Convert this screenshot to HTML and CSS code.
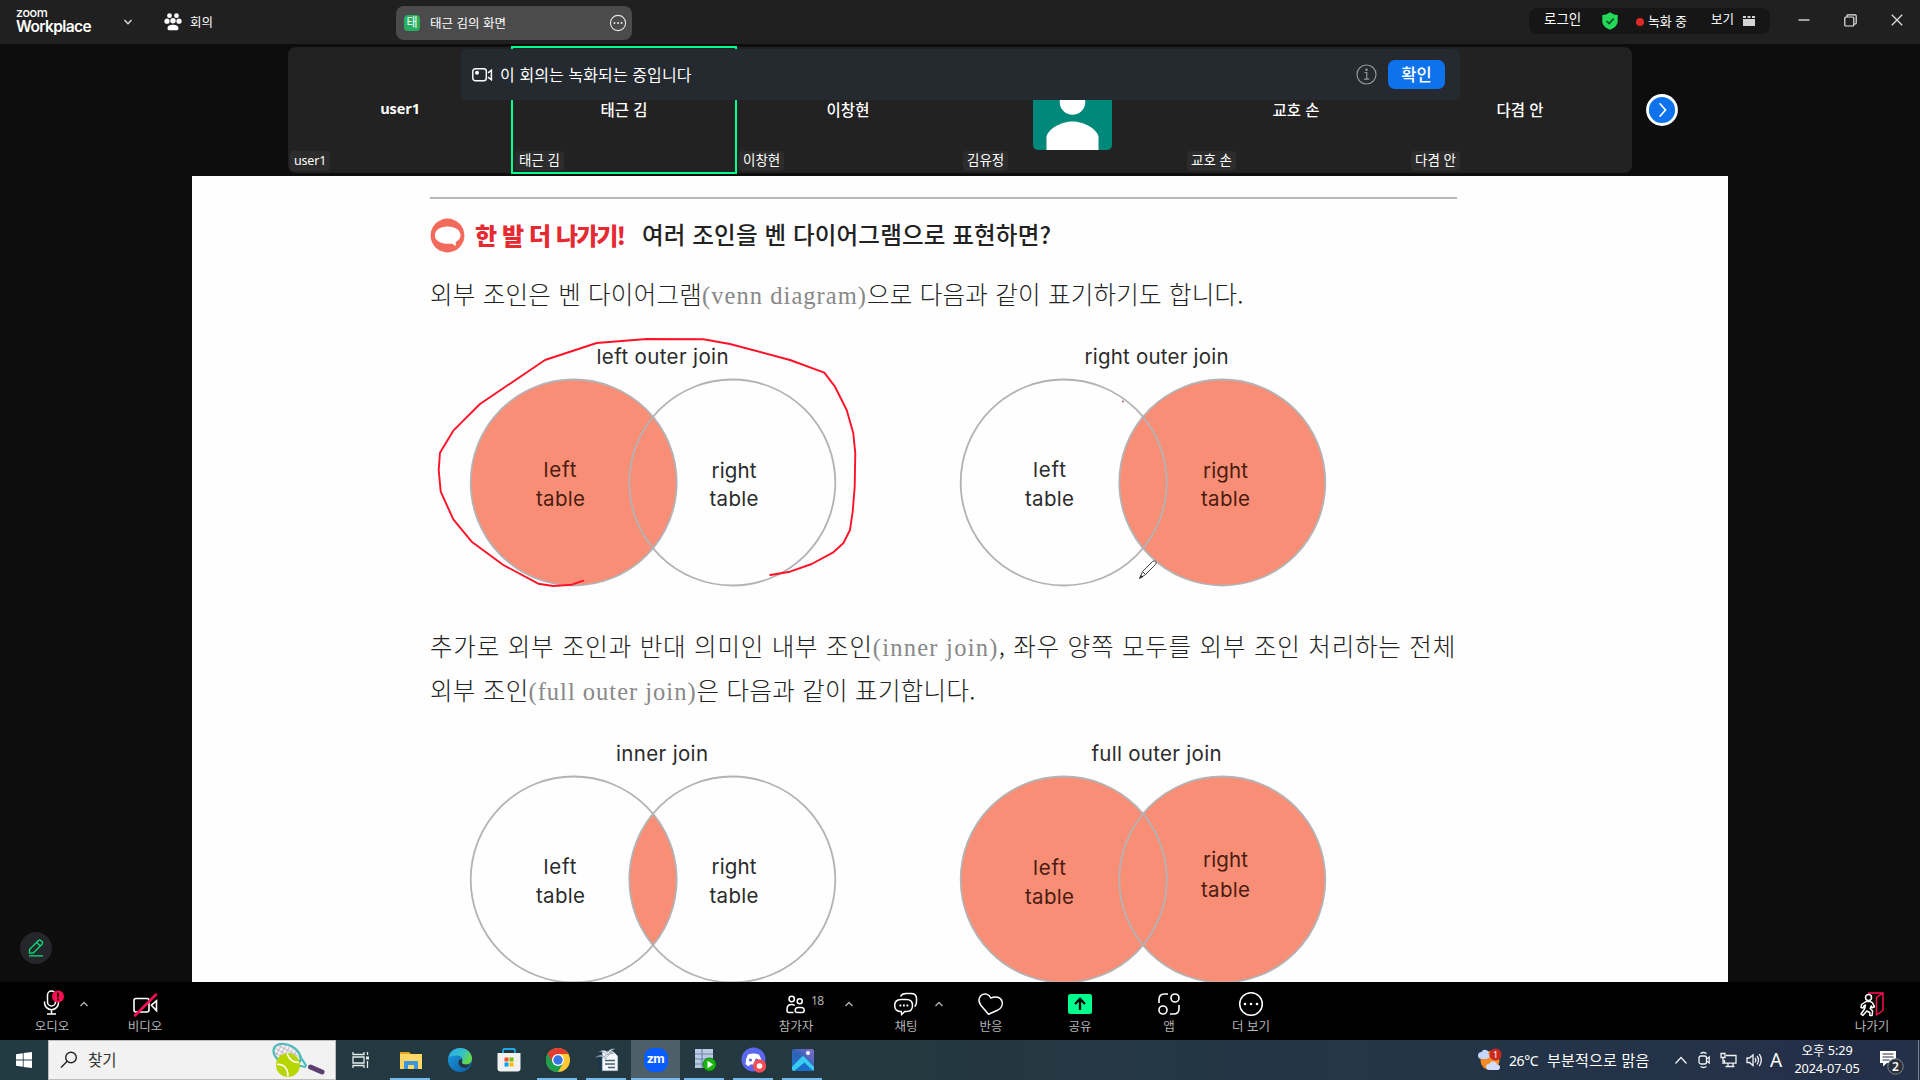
FILE: index.html
```html
<!DOCTYPE html>
<html lang="ko">
<head>
<meta charset="utf-8">
<title>Zoom Workplace</title>
<link rel="stylesheet" href="styles.css">
</head>
<body>
<div class="screen">
  <header class="titlebar">
    <div class="logo"><span class="logo-top">zoom</span><span class="logo-name">Workplace</span></div>
    <svg class="tb-chev" width="10" height="8" viewBox="0 0 10 8"><path d="M1.5 2l3.5 3.7L8.500 2" fill="none" stroke="#ddd" stroke-width="1.4"/></svg>
    <div class="meeting">
      <svg width="18" height="18" viewBox="0 0 18 18" fill="#fff"><circle cx="5.500" cy="2.700" r="2.400"/><circle cx="12.500" cy="2.700" r="2.400"/><circle cx="3" cy="8.200" r="2.600"/><circle cx="15" cy="8.200" r="2.600"/><circle cx="9" cy="7.800" r="2.700"/><path d="M3.500 15.500c0-2.800 2.500-3.800 5.500-3.800s5.500 1 5.500 3.800c0 1.300-1 1.800-2.200 1.800H5.700c-1.200 0-2.200-.5-2.200-1.800z"/></svg>
      <span>회의</span>
    </div>
    <div class="tab">
      <span class="tab-badge">태</span><span class="tab-name">태근 김의 화면</span>
      <svg width="18" height="18" viewBox="0 0 18 18"><circle cx="9" cy="9" r="7.600" fill="none" stroke="#e4e4e4" stroke-width="1.100"/><g fill="#e4e4e4"><circle cx="5.500" cy="9" r="1"/><circle cx="9" cy="9" r="1"/><circle cx="12.500" cy="9" r="1"/></g></svg>
    </div>
    <div class="status">
      <span class="up login">로그인</span>
      <svg class="shield" width="16" height="18" viewBox="0 0 16 18"><path d="M8 .3c2 1.700 4.500 2.500 7.700 2.700v6.300c0 4-3.500 7-7.700 8.500C3.800 16.300.3 13.300.3 9.300V3C3.500 2.800 6 2 8 .3z" fill="#23d959"/><path d="M4.500 9l2.600 2.600 4.600-5" fill="none" stroke="#124b22" stroke-width="1.600"/></svg>
      <span class="rec-dot"></span><span class="rec">녹화 중</span>
      <span class="up view">보기</span>
      <svg class="view-icon" width="12" height="12" viewBox="0 0 12 12" fill="#d4d4d4"><path d="M0 1h3v2H0zM4.500 1h3v2h-3zM9 1h3v2H9zM0 4h12v7H0z"/></svg>
    </div>
    <div class="win-buttons">
      <svg width="12" height="12" viewBox="0 0 12 12"><path d="M.5 6h11" stroke="#ccc" stroke-width="1.500"/></svg>
      <svg width="13" height="13" viewBox="0 0 13 13" fill="none" stroke="#e8e8e8" stroke-width="1.200"><rect x=".8" y="3" width="9" height="9" rx="1"/><path d="M3 3V1.600Q3 .8 4 .8h7.200q1 0 1 1V9q0 1-1 1H10"/></svg>
      <svg width="12" height="12" viewBox="0 0 12 12"><path d="M.8.8l10.400 10.400M11.200.8L.8 11.200" stroke="#ddd" stroke-width="1.300"/></svg>
    </div>
  </header>

  <section class="gallery">
    <div class="strip">
      <div class="tile"><b class="latin">user1</b><span class="tag latin">user1</span></div>
      <div class="tile active"><b>태근 김</b><span class="tag">태근 김</span></div>
      <div class="tile"><b>이창현</b><span class="tag">이창현</span></div>
      <div class="tile">
        <svg class="avatar" width="79" height="79" viewBox="0 0 79 79"><rect width="79" height="79" rx="5" fill="#00897b"/><circle cx="39.500" cy="31" r="12.800" fill="#fff"/><path d="M13.500 79V57c2-8 15-15 26-15s24 7 26 15v22z" transform="translate(0 8.500)" fill="#fff"/></svg>
        <span class="tag">김유정</span></div>
      <div class="tile"><b>교호 손</b><span class="tag">교호 손</span></div>
      <div class="tile"><b>다겸 안</b><span class="tag">다겸 안</span></div>
    </div>
    <svg class="next" width="32" height="32" viewBox="0 0 32 32"><circle cx="16" cy="16" r="14.500" fill="#0e72ed" stroke="#fff" stroke-width="2.800"/><path d="M14 9.800l5.500 6.200-5.500 6.200" fill="none" stroke="#fff" stroke-width="1.700" stroke-linecap="round"/></svg>
    <div class="banner">
      <svg width="21" height="14" viewBox="0 0 21 14"><rect x=".8" y=".8" width="13.500" height="12" rx="2.500" fill="none" stroke="#fff" stroke-width="1.400"/><circle cx="5" cy="4.800" r="2" fill="#fff"/><path d="M16 4.800l3.400-2.600v9.600L16 9.200" fill="none" stroke="#fff" stroke-width="1.500"/></svg>
      <span class="banner-text">이 회의는 녹화되는 중입니다</span>
      <svg class="info" width="21" height="21" viewBox="0 0 21 21" fill="none" stroke="#92959a" stroke-width="1.200"><circle cx="10.500" cy="10.500" r="9.500"/><path d="M8.500 8.500h2.300v6.500M8 15.200h5.200"/><circle cx="10.500" cy="5.700" r=".7"/></svg>
      <button class="ok">확인</button>
    </div>
  </section>

  <main class="stage">
    <article class="page">
      <div class="rule"></div>
      <h1 class="heading">
        <svg width="35" height="35" viewBox="0 0 35 35"><circle cx="17.500" cy="17.500" r="16.900" fill="#f26a5c"/><path d="M17.500 8.500c8 0 13 3.700 13 8.800 0 3.200-2 5.200-4.800 6.600l.2 4-4.500-2.300c-9 1.200-16.500-2-16.500-8.300 0-5.100 5-8.800 12.600-8.800z" fill="#fff"/></svg>
        <span class="red">한 발 더 나가기!</span><span class="question">여러 조인을 벤 다이어그램으로 표현하면?</span>
      </h1>
      <p class="para p1">외부 조인은 벤 다이어그램<i>(venn diagram)</i>으로 다음과 같이 표기하기도 합니다.</p>
      <div class="figures top">
        <svg class="venn" width="510" height="265" viewBox="430 335 510 265">
          <circle class="fill" cx="573.700" cy="482.500" r="103"/><circle class="ring" cx="573.700" cy="482.500" r="103"/><circle class="ring" cx="732.300" cy="482.500" r="103"/>
          <text x="662.500" y="363.500" textLength="132">left outer join</text>
          <text class="on" x="560" y="477" textLength="33">left</text><text class="on" x="560.500" y="506" textLength="49">table</text>
          <text x="734" y="477.500" textLength="45">right</text><text x="734" y="506" textLength="49">table</text>
          <path class="ink" d="M770.300 575l19.700-3.300 21.700-7.700 21.600-11.700 10-9 6.700-13.300 2.700-18.300 2-25 .6-33.400-2-20-6.600-23.300-11.700-23.300-10.700-14L790 360l-60-16-26.700-4.700-56.600-.3-50 4L545 360l-65 44-16.700 16.700-10 10L440 452.700l-1.300 17.300 2 21.700 12.600 27.600 18.400 22.400 31.600 23.300 35 18.700 15 2.300 18.400-1.300 11.600-4"/>
        </svg>
        <svg class="venn" width="510" height="265" viewBox="940 335 510 265">
          <circle class="fill" cx="1222.300" cy="482.500" r="103"/><circle class="ring" cx="1063.700" cy="482.500" r="103"/><circle class="ring" cx="1222.300" cy="482.500" r="103"/>
          <text x="1156.500" y="363.500" textLength="144">right outer join</text>
          <text x="1049.500" y="477" textLength="33">left</text><text x="1049.500" y="506" textLength="49">table</text>
          <text class="on" x="1225.500" y="477.500" textLength="45">right</text><text class="on" x="1225.500" y="506" textLength="49">table</text>
          <circle cx="1123" cy="401.500" r=".9" fill="#a44"/>
          <path d="M1139.500 578.500l3-7 10-10q2-1.500 3.300 0 1 1.500-.3 3l-10 10zM1142.500 571.500l3 3" fill="#fff" stroke="#444" stroke-width="1"/>
          <path d="M1139.500 578.500l1.500-3.500 2 2z" fill="#222"/>
        </svg>
      </div>
      <p class="para p2">추가로 외부 조인과 반대 의미인 내부 조인<i>(inner join)</i>, 좌우 양쪽 모두를 외부 조인 처리하는 전체</p>
      <p class="para p3">외부 조인<i>(full outer join)</i>은 다음과 같이 표기합니다.</p>
      <div class="figures bottom">
        <svg class="venn" width="510" height="250" viewBox="430 732 510 250">
          <path class="fill" d="M653 813.800A103 103 0 0 1 653 945.200A103 103 0 0 1 653 813.800z"/>
          <circle class="ring" cx="573.700" cy="879.500" r="103"/><circle class="ring" cx="732.300" cy="879.500" r="103"/>
          <text x="662" y="760.500" textLength="92">inner join</text>
          <text x="560" y="873.500" textLength="33">left</text><text x="560.500" y="903" textLength="49">table</text>
          <text x="734" y="873.500" textLength="45">right</text><text x="734" y="903" textLength="49">table</text>
        </svg>
        <svg class="venn" width="510" height="250" viewBox="940 732 510 250">
          <circle class="fill" cx="1063.700" cy="879.500" r="103"/><circle class="fill" cx="1222.300" cy="879.500" r="103"/><circle class="ring" cx="1063.700" cy="879.500" r="103"/><circle class="ring" cx="1222.300" cy="879.500" r="103"/>
          <text x="1156.500" y="760.500" textLength="130">full outer join</text>
          <text class="on" x="1049.500" y="875" textLength="33">left</text><text class="on" x="1049.500" y="904" textLength="49">table</text>
          <text class="on" x="1225.500" y="867" textLength="45">right</text><text class="on" x="1225.500" y="897" textLength="49">table</text>
        </svg>
      </div>
    </article>
    <div class="annotate"><svg width="18" height="18" viewBox="0 0 18 18" fill="none" stroke="#0be07e" stroke-width="1.300" stroke-linejoin="round"><path d="M2.500 10.500l9-9q1.200-1 2.500.2l1 1q1.200 1.300 0 2.500l-9 9H2.500zM9.700 3.500l3.800 3.800M2 16.800h14"/></svg></div>
  </main>

  <nav class="toolbar">
    <div class="tool audio">
      <svg width="28" height="28" viewBox="0 0 28 28" fill="none" stroke="#fff" stroke-width="1.500"><rect x="9.500" y="1" width="8" height="15" rx="4"/><path d="M6.500 11.500v1.200a7 7 0 0 0 14 0v-1.200M13.500 19.500v4M9 24h9"/><circle cx="20" cy="6.500" r="6" fill="#ff0d52" stroke="none"/><path d="M20 2.500v4.800M20 8.500v2" stroke="#2c0010" stroke-width="2"/></svg>
      <span>오디오</span></div>
    <svg class="caret" width="10" height="8" viewBox="0 0 10 8"><path d="M1.500 6L5 2.500 8.500 6"/></svg>
    <div class="tool video">
      <svg width="28" height="28" viewBox="0 0 28 28" fill="none" stroke="#fff" stroke-width="1.600"><rect x="3" y="8.500" width="15" height="13.500" rx="2"/><path d="M20.500 15.200l5-4.500v10z"/><path d="M4 25.500L25 4.500" stroke="#ff0d52" stroke-width="2.500" stroke-linecap="round"/></svg>
      <span>비디오</span></div>
    <div class="tool people">
      <svg width="28" height="28" viewBox="0 0 28 28" fill="none" stroke="#fff" stroke-width="1.500"><circle cx="9.700" cy="9" r="2.700"/><circle cx="17.700" cy="11.200" r="2.500"/><path d="M11.500 22.500H7q-2 0-2-2v-1.300q0-4.700 4.700-4.700 1.800 0 3 1M16 17.500h3.200q3 0 3 3 0 2-2 2h-5q-2 0-2-2 0-3 2.800-3z"/></svg>
      <span>참가자</span><em class="count">18</em></div>
    <svg class="caret c2" width="10" height="8" viewBox="0 0 10 8"><path d="M1.500 6L5 2.500 8.500 6"/></svg>
    <div class="tool chat">
      <svg width="28" height="28" viewBox="0 0 28 28" fill="none" stroke="#fff" stroke-width="1.500"><path d="M8.500 9.500h6q6 0 6 6t-6 6h-1.800l-3 3-.5-3h-1q-5.500-.3-5.500-6t6-6z"/><path d="M8.500 6.500q1.500-3 5.500-3h5q5.500 0 5.500 5v2.500q0 4.500-2 5.500"/><path d="M7.500 15.500h1.800M11 15.500h1.800M14.500 15.500h1.800" stroke-width="2"/></svg>
      <span>채팅</span></div>
    <svg class="caret c3" width="10" height="8" viewBox="0 0 10 8"><path d="M1.500 6L5 2.500 8.500 6"/></svg>
    <div class="tool react">
      <svg width="28" height="28" viewBox="0 0 28 28" fill="none" stroke="#fff" stroke-width="1.500" stroke-linejoin="round"><path d="M11.500 24.200L4 15.500C1.500 12 1.500 8 4 5.500 7.500 2.500 12 4 13.800 8c5-2 10-1 11.200 3.500 1 3.500-1 7-4.500 8.700z"/></svg>
      <span>반응</span></div>
    <div class="tool share">
      <svg width="28" height="28" viewBox="0 0 28 28"><rect x="2" y="4" width="24" height="20" rx="2.500" fill="#00ff8c"/><path d="M14 20v-9M9 14l5-5 5 5" fill="none" stroke="#000" stroke-width="2.300"/></svg>
      <span>공유</span></div>
    <div class="tool apps">
      <svg width="28" height="28" viewBox="0 0 28 28" fill="none" stroke="#fff" stroke-width="1.600"><circle cx="20" cy="8" r="4"/><circle cx="8" cy="20" r="4"/><path d="M4 13V9.500Q4 4 9.500 4H13M24 15v3.500q0 5.500-5.500 5.500H15"/></svg>
      <span>앱</span></div>
    <div class="tool more">
      <svg width="28" height="28" viewBox="0 0 28 28"><circle cx="14" cy="14" r="11.300" fill="none" stroke="#fff" stroke-width="1.500"/><g fill="#fff"><circle cx="8" cy="14" r="1.300"/><circle cx="14" cy="14" r="1.300"/><circle cx="20" cy="14" r="1.300"/></g></svg>
      <span>더 보기</span></div>
    <div class="tool leave">
      <svg width="28" height="28" viewBox="0 0 28 28" fill="none" stroke="#fff" stroke-width="1.500" stroke-linejoin="round" stroke-linecap="round"><path d="M10.500 3H25v17.500l-6.500 4.500V7.500L25 3" stroke="#ff0d52"/><circle cx="10.500" cy="7.500" r="3"/><path d="M8 11.500l-4.500 3-.5 3 2 .5 1-2.200 1.500-.8-1 4-3.500 5 1.800 1.500 4-4.500 3 1.500 0 3h2.300l.5-4.500-2.400-2.500 1-2.500 1 1.800 2.300-1-2-4-2.500-1.500z"/></svg>
      <span>나가기</span></div>
  </nav>

  <footer class="taskbar">
    <div class="start"><svg width="16" height="16" viewBox="0 0 16 16" fill="#fff"><path d="M0 2.200l6.800-1v6.400H0zM7.600 1.100L16 0v7.600H7.600zM0 8.400h6.800v6.400L0 13.800zM7.600 8.400H16V16l-8.400-1.100z"/></svg></div>
    <div class="search">
      <svg width="18" height="18" viewBox="0 0 18 18" fill="none" stroke="#222" stroke-width="1.400"><circle cx="11" cy="6.500" r="5.300"/><path d="M7.200 10.300L1 16.500"/></svg>
      <span>찾기</span>
      <svg class="racket" width="54" height="36" viewBox="0 0 54 36"><g transform="rotate(28 16 12)"><ellipse cx="15.500" cy="13" rx="14.500" ry="9.500" fill="#f4eef4" stroke="#48bcb8" stroke-width="2.200"/><path d="M6 6v14M10 4v18M14 3.500v19M18 3.500v19M22 5v16M3 9h24M2 13h26M3 17h24" stroke="#a9a2b5" stroke-width=".6"/><path d="M27 8l11 6M27 18.500l11-3.500" stroke="#48bcb8" stroke-width="2"/></g><path d="M38.500 25l11.500 5" stroke="#5b3f70" stroke-width="5" stroke-linecap="round"/><circle cx="16" cy="23" r="12" fill="#b7d500"/><path d="M5 22.500c6-1 11 3 11 12M15 11.500c2 6 6 9 12 9" fill="none" stroke="#fff" stroke-width="1.600"/></svg>
    </div>
    <div class="task view-btn"><svg width="17" height="16" viewBox="0 0 17 16" fill="none" stroke="#e8eced" stroke-width="1.300"><path d="M1 0v2.500h11V0M1 16v-2.500h11V16M1 5h11v6H1zM15.500 0v3M15.500 9v7"/><path d="M15.500 4.500v3" stroke-width="3"/></svg></div>
    <div class="task open"><svg width="24" height="24" viewBox="0 0 24 24"><path d="M1 4h9l2 2h11v14H1z" fill="#e7a51d"/><rect x="1" y="6" width="22" height="15" fill="#ffd766"/><path d="M5 21v-7q0-1 1-1h12q1 0 1 1v7h-4v-4H9v4z" fill="#3c96dd"/></svg></div>
    <div class="task"><svg width="24" height="24" viewBox="0 0 24 24"><defs><linearGradient id="eg" x1="0" y1="0" x2="1" y2="0.500"><stop offset="0" stop-color="#2ba6e8"/><stop offset=".6" stop-color="#35c1c8"/><stop offset="1" stop-color="#66d84a"/></linearGradient><linearGradient id="eb" x1="0" y1="0" x2="1" y2="1"><stop offset="0" stop-color="#1b9de2"/><stop offset="1" stop-color="#0c59a4"/></linearGradient></defs><circle cx="12" cy="12" r="12" fill="url(#eb)"/><path d="M.5 9.500C2 3.500 6.500 0 12 0c7 0 12 5 12 10.500 0 4-3 6-6 6-3.500 0-4.500-1.500-4-3 1.500-2.500-.5-6-5-6-3.500 0-7 1-8.500 2z" fill="url(#eg)"/><path d="M14 13.500c-.5 1.500.5 3 4 3 1.800 0 3.200-.5 4.300-1.500-1 3-3 4.500-5.300 5-5 0-8-4-6-7.500.8-1.300 2-1.500 3-1.300.3.800.3 1.600 0 2.300z" fill="#24363e"/></svg></div>
    <div class="task"><svg width="24" height="24" viewBox="0 0 24 24"><path d="M6 6V2.500Q6 1 7.500 1h9Q18 1 18 2.500V6" fill="none" stroke="#1fa9e6" stroke-width="1.800"/><path d="M.5 5h23v15.500q0 3-3 3h-17q-3 0-3-3z" fill="#f1f1f1"/><path d="M7.500 9.500h4v4h-4z" fill="#f25022"/><path d="M12.500 9.500h4v4h-4z" fill="#7fba00"/><path d="M7.500 14.500h4v4h-4z" fill="#00a4ef"/><path d="M12.500 14.500h4v4h-4z" fill="#ffb900"/></svg></div>
    <div class="task open"><svg width="24" height="24" viewBox="0 0 24 24"><circle cx="12" cy="12" r="12" fill="#fcc934"/><path d="M12 12L1.600 6A12 12 0 0 1 22.400 6H12z" fill="#e33b2e"/><path d="M1.600 6A12 12 0 0 0 12 24l5.200-9L12 12z" fill="#1e9e4f"/><path d="M1.600 6l5.200 9L12 12V6z" fill="#e33b2e"/><path d="M1.600 6l5.200 9 5.200 3v6A12 12 0 0 1 1.600 6z" fill="#1e9e4f"/><circle cx="12" cy="12" r="6" fill="#fff"/><circle cx="12" cy="12" r="4.700" fill="#3578e5"/></svg></div>
    <div class="task open"><svg width="24" height="24" viewBox="0 0 24 24"><path d="M4 5h3v18H4z" fill="#16354f"/><path d="M7 3h11l5 5v15H7z" fill="#f5f7f8" stroke="#34536c" stroke-width=".7"/><path d="M10 12.500h10M10 16h10M13 19.500h7" stroke="#44617a" stroke-width="1.500"/><path d="M.5 9.500c4-3 7-3 9-.5 2-4 5-5 9-4-3 .5-6 2-8 6-2.500-3-6-3-10-1.500z" fill="#eef2f4" stroke="#44617a" stroke-width=".5"/><path d="M4 4c4-3 7-2 8.500.5C14.500 1 17 .5 20 1c-3 1-5 2.500-7.500 6C10 4 7 3 4 4z" fill="#eef2f4" stroke="#44617a" stroke-width=".5"/></svg></div>
    <div class="task open current"><span class="zm">zm</span></div>
    <div class="task open"><svg width="24" height="24" viewBox="0 0 24 24"><path d="M2 1h18v19H2z" fill="#b9cbe2"/><path d="M2 6h18M2 11h18M2 16h18M9 1v19" stroke="#6c86a8" stroke-width="1.200"/><circle cx="16.500" cy="16.500" r="6.500" fill="#18b60e" stroke="#0a7206" stroke-width=".8"/><path d="M14.500 12.800l5.500 3.700-5.500 3.700z" fill="#fff"/></svg></div>
    <div class="task open"><svg width="26" height="26" viewBox="0 0 26 26"><circle cx="12.500" cy="12.500" r="12" fill="#5b67ee"/><path d="M7 7.500q5.500-2 11 0 3 4.500 3 9.500-2 2-4 2.200l-1.200-1.700h-6.600L8 19.200Q6 19 4.500 17 4.300 12 7 7.500z" fill="#fff"/><circle cx="9.500" cy="13" r="1.600" fill="#5b67ee"/><circle cx="15.500" cy="13" r="1.600" fill="#5b67ee"/><circle cx="18.500" cy="19" r="6.700" fill="#ee4f56"/><circle cx="18.500" cy="19" r="2.800" fill="#fff"/></svg></div>
    <div class="task open"><svg width="24" height="24" viewBox="0 0 24 24"><defs><linearGradient id="ph" x1="0" y1="1" x2="1" y2="0"><stop offset="0" stop-color="#1479d5"/><stop offset=".5" stop-color="#2f63b8"/><stop offset="1" stop-color="#8a6cc8"/></linearGradient></defs><rect x="1" y="1" width="22" height="22" rx="2" fill="url(#ph)"/><path d="M1 19l9.500-10q1.500-1.300 3 0L23 19v2q0 2-2 2H3q-2 0-2-2z" fill="#38cdf0"/><path d="M3 23l10.500-8.500L22 22.700q-.5.300-1 .3z" fill="#1a6fcb"/><circle cx="17" cy="5" r="2" fill="#fff"/></svg></div>

    <div class="weather">
      <svg width="24" height="24" viewBox="0 0 24 24"><circle cx="12" cy="12.500" r="9.500" fill="#f58b27"/><path d="M4 11q-4 0-4-3.500Q0 4 3.500 4 5 1 8 2q3 .8 2.500 4 1.500 1 .8 3-.8 2-3 2z" fill="#c5d4fa"/><path d="M12 22q-4 0-4-3t3.500-3.500q2-3 5-2 2.500.8 2.500 3 3 0 3 2.700 0 2.800-3 2.800z" fill="#d4dcfb"/><circle cx="17.500" cy="6.500" r="6" fill="#c92a20"/><text x="17.500" y="10" text-anchor="middle" font-size="9" fill="#fff" font-family="Noto Sans">1</text></svg>
      <span class="temp">26°C</span><span class="sky">부분적으로 맑음</span>
    </div>
    <div class="tray">
      <svg width="14" height="12" viewBox="0 0 14 12"><path d="M1.500 9.500L7 3.500l5.500 6"/></svg>
      <svg width="14" height="18" viewBox="0 0 14 18"><rect x="2" y="5" width="7.500" height="8" rx="2"/><path d="M9.500 8l2.700-2v6l-2.700-2M3.500 2.500Q6.500.5 9.500 2.500M3.500 15.500q3 2 6 0"/></svg>
      <svg width="17" height="16" viewBox="0 0 17 16"><path d="M6 3.500h10v7.700H4.500V8M8 11.500v3M13 11.500v3M5.500 14.500h9M1 1.500h4v4H1zM3 5.500V12"/></svg>
      <svg width="17" height="14" viewBox="0 0 17 14"><path d="M1 5h2.500L7 2v10.500L3.500 9.500H1zM9 5q1.500 2 0 4.500M11 3q3 4 0 8.500M13.300 1.200q4 5.800 0 12"/></svg>
      <span class="ime">A</span>
    </div>
    <div class="clock"><span>오후 5:29</span><span>2024-07-05</span></div>
    <div class="notes"><svg width="26" height="26" viewBox="0 0 26 26"><path d="M1 2h16v12h-9l-4 3.500V14H1z" fill="#fff"/><path d="M3.500 5h11M3.500 8h11M3.500 11h7" stroke="#27344c" stroke-width="1.100"/><circle cx="16.500" cy="17.500" r="7.700" fill="#2a2f38" stroke="#7e8694"/><text x="16.500" y="22" text-anchor="middle" font-size="12" font-weight="600" fill="#fff" font-family="Noto Sans">2</text></svg></div>
    <div class="peek"></div>
  </footer>
</div>
</body>
</html>
```
FILE: styles.css
```css
* { box-sizing: border-box; }
body { margin: 0; background: #0d0d0d; font-family: "Noto Sans CJK KR", "Noto Sans", sans-serif; color: #fff; }
svg { display: block; flex: none; }
span, b { white-space: nowrap; }
.screen { width: 1920px; height: 1080px; display: flex; flex-direction: column; overflow: hidden; }

.titlebar { height: 44px; background: #202020; display: flex; align-items: center; padding-left: 16px; flex: none; font-size: 12.5px; }
.logo { display: flex; flex-direction: column; width: 107px; font-family: Inter, sans-serif; padding-bottom: 5px; }
.logo-top { font-size: 12.5px; line-height: 13px; font-weight: 500; letter-spacing: -0.4px; }
.logo-name { font-size: 15.5px; line-height: 15px; font-weight: 600; letter-spacing: -0.6px; }
.meeting { display: flex; align-items: center; gap: 8px; margin-left: 31px; width: 232px; }
.meeting span { padding-bottom: 1px; }
.tab { width: 236px; height: 34px; margin: 2px -1px 0 0; background: #4b4b4b; border-radius: 8px; display: flex; align-items: center; padding: 0 5px 0 8px; }
.tab-badge { width: 16px; height: 16px; border-radius: 4px; background: #27ae60; font-size: 12px; line-height: 14px; text-align: center; }
.tab-name { margin-left: 10px; padding-bottom: 2px; flex: 1; letter-spacing: 0; }
.status { margin: -2px 0 0 898px; width: 241px; height: 26px; border-radius: 8px; background: #161616; display: flex; align-items: center; padding-left: 15px; }
.up { position: relative; top: -3px; }
.login { width: 58px; font-size: 13.5px; }
.rec-dot { width: 8px; height: 8px; border-radius: 50%; background: #e02828; margin-left: 18px; margin-top: 2px; }
.rec { margin-left: 4px; width: 63px; font-size: 13px; letter-spacing: -0.2px; padding-bottom: 2px; }
.view { width: 32px; }
.win-buttons { display: flex; align-items: center; gap: 34px; margin: -4px 0 0 28px; }

.gallery { position: relative; height: 132px; flex: none; display: flex; align-items: center; padding: 3px 0 3px 288px; }
.strip { display: flex; width: 1344px; height: 126px; background: #222; border-radius: 8px; }
.tile { position: relative; width: 224px; display: flex; align-items: center; justify-content: center; flex: none; }
.tile b { font-size: 15.5px; font-weight: 500; line-height: 20px; padding-bottom: 2px; }
.tile b.latin { font-weight: 700; font-size: 14.5px; font-family: "Open Sans", sans-serif; letter-spacing: -0.1px; }
.tile.active::before { content: ""; position: absolute; inset: -1px -1px -1px -1px; border: 2px solid #00ff8c; }
.tag { position: absolute; left: 3px; bottom: 2px; height: 20px; padding: 0 4px; border-radius: 4px; background: #2c2c2c; font-size: 13.5px; line-height: 17px; }
.tag.latin { left: 2px; font-family: "Noto Sans", sans-serif; font-size: 12.5px; line-height: 20px; letter-spacing: -0.2px; }
.next { margin-left: 14px; }
.banner { position: absolute; left: 461px; top: 5px; width: 999px; height: 51px; border-radius: 5px; background: #252a31; display: flex; align-items: center; padding: 0 15px 0 11px; }
.banner-text { margin-left: 7px; padding-bottom: 2px; font-size: 16px; letter-spacing: 0.1px; flex: 1; }
.info { margin-right: 11px; }
.ok { width: 57px; height: 29px; border: 0; padding: 0; border-radius: 7px; background: #0e72ed; color: #fff; font: 500 16.5px/27px "Noto Sans CJK KR", sans-serif; }

.stage { position: relative; height: 806px; flex: none; padding-left: 192px; }
.page { width: 1536px; height: 806px; background: #fefefe; padding: 21px 0 0 238px; overflow: hidden; display: flex; flex-direction: column; color: #222; }
.rule { width: 1027px; height: 2px; background: #b8b8b8; flex: none; }
.heading { display: flex; align-items: center; margin: 19px 0 0; height: 35px; font-weight: 400; flex: none; }
.heading span { padding-bottom: 3px; }
.red { color: #e62a32; font-weight: 900; font-size: 24px; letter-spacing: -1.9px; word-spacing: 2px; margin-left: 10px; width: 167px; }
.question { font-size: 23.5px; font-weight: 500; letter-spacing: 0.17px; }
.para { margin: 0; height: 44px; line-height: 42px; font-size: 24.5px; font-weight: 300; white-space: nowrap; color: #222; flex: none; }
.para i { font-style: normal; font-family: "Liberation Serif", serif; color: #888; }
.p1 { margin-top: 20px; letter-spacing: 0.25px; }
.p1 i { letter-spacing: 1.05px; }
.figures { display: flex; flex: none; }
.top { margin-top: 18px; }
.p2 { margin-top: 25px; letter-spacing: 0.8px; }
.p2 i { letter-spacing: 1.25px; }
.p3 i { letter-spacing: 1px; }
.p3 { letter-spacing: 0.3px; }
.bottom { margin-top: 19px; }
.venn text { font-family: Inter, "Noto Sans", sans-serif; font-size: 20.5px; fill: #2b2b2b; text-anchor: middle; }
.venn text.on { fill: #4a1c10; }
.fill { fill: #f88e76; }
.ring { fill: none; stroke: #b4b2b4; stroke-width: 1.8px; }
.ink { fill: none; stroke: #ff1228; stroke-width: 1.9px; stroke-linejoin: round; stroke-linecap: round; }
.annotate { position: absolute; left: 20px; top: 756px; width: 32px; height: 32px; border-radius: 50%; background: #25262a; display: flex; align-items: center; justify-content: center; }

.toolbar { height: 58px; flex: none; background: #000; display: flex; padding: 8px 0 0 22px; }
.tool { position: relative; width: 60px; display: flex; flex-direction: column; align-items: center; flex: none; }
.tool span { font-size: 12.5px; line-height: 16px; margin-top: 0; color: #b5b5b5; }
.caret { margin: 10px 0 0 -3px; fill: none; stroke: #aaa; stroke-width: 1.5px; }
.video { margin-left: 26px; }
.people { margin-left: 591px; }
.count { position: absolute; left: 45px; top: 3px; font-style: normal; font-size: 12px; line-height: 16px; color: #b5b5b5; font-family: "Noto Sans", sans-serif; letter-spacing: -0.5px; }
.c2 { margin-left: 18px; }
.chat { margin-left: 22px; }
.c3 { margin-left: -2px; }
.react { margin-left: 17px; }
.share { margin-left: 29px; }
.apps { margin-left: 29px; }
.more { margin-left: 22px; }
.leave { margin-left: 561px; }

.taskbar { height: 40px; flex: none; display: flex; background: linear-gradient(90deg, #223a42, #24383f 45%, #243647 70%, #242f48); }
.start { width: 48px; display: flex; align-items: center; justify-content: center; }
.search { width: 288px; background: #f2f2f2; border: 1px solid #bcbcbc; display: flex; align-items: center; padding-left: 11px; color: #333; font-size: 15.5px; }
.search span { margin: 0 0 2px 10px; width: 156px; }
.racket { margin-left: 28px; }
.task { position: relative; width: 49px; display: flex; align-items: center; justify-content: center; flex: none; }
.task.open::after { content: ""; position: absolute; left: 4px; right: 5px; bottom: 0; height: 2px; background: #76b9ed; }
.task.current { background: #4d6069; }
.task.current::after { left: 0; right: 0; }
.view-btn { width: 48px; margin-right: 2px; }
.zm { width: 24px; height: 24px; border-radius: 9px; background: #0b5cff; font: 700 12.5px/22px Inter, sans-serif; text-align: center; letter-spacing: -0.5px; }
.weather { display: flex; align-items: center; margin-left: 651px; width: 196px; font-size: 15px; }
.temp { margin-left: 7px; width: 38px; font-family: "Noto Sans", sans-serif; font-size: 14px; letter-spacing: -0.4px; }
.sky { font-size: 15px; letter-spacing: 0.2px; padding-bottom: 2px; }
.tray { display: flex; align-items: center; gap: 9px; width: 110px; fill: none; stroke: #f2f2f2; stroke-width: 1.3px; }
.ime { font-size: 19px; font-family: "Noto Sans", sans-serif; margin-left: -2px; }
.clock { width: 86px; display: flex; flex-direction: column; align-items: center; font-size: 12.7px; line-height: 18px; padding-top: 1px; font-family: "Noto Sans", "Noto Sans CJK KR", sans-serif; letter-spacing: -0.1px; }
.notes { display: flex; align-items: center; width: 48px; padding: 4px 0 0 9px; }
.peek { width: 1px; background: #78808f; }
```
